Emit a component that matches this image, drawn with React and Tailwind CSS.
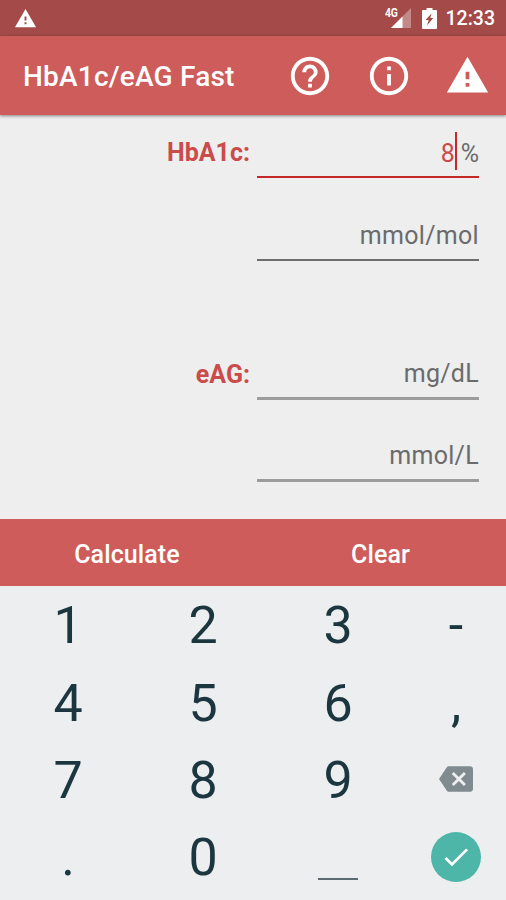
import { useState } from 'react';

const ICONS = {
  help: 'M11 18h2v-2h-2v2zm1-16C6.48 2 2 6.48 2 12s4.48 10 10 10 10-4.48 10-10S17.52 2 12 2zm0 18c-4.41 0-8-3.59-8-8s3.59-8 8-8 8 3.59 8 8-3.59 8-8 8zm0-14c-2.21 0-4 1.79-4 4h2c0-1.1.9-2 2-2s2 .9 2 2c0 2-3 1.75-3 5h2c0-2.25 3-2.5 3-5 0-2.21-1.79-4-4-4z',
  info: 'M11 17h2v-6h-2v6zm1-15C6.48 2 2 6.48 2 12s4.48 10 10 10 10-4.48 10-10S17.52 2 12 2zm0 18c-4.41 0-8-3.59-8-8s3.59-8 8-8 8 3.59 8 8-3.59 8-8 8zM11 9h2V7h-2v2z',
  warning: 'M1 21h22L12 2 1 21zm12-3h-2v-2h2v2zm0-4h-2v-4h2v4z',
  backspace: 'M22 3H7c-.69 0-1.23.35-1.59.88L0 12l5.41 8.11c.36.53.9.89 1.59.89h15c1.1 0 2-.9 2-2V5c0-1.1-.9-2-2-2zm-3 12.59L17.59 17 14 13.41 10.41 17 9 15.59 12.59 12 9 8.41 10.41 7 14 10.59 17.59 7 19 8.41 15.41 12 19 15.59z',
  check: 'M9 16.17L4.83 12l-1.42 1.41L9 19 21 7l-1.41-1.41z',
};

function Icon({ name, className }) {
  return (
    <svg viewBox="0 0 24 24" fill="currentColor" className={`shrink-0 ${className}`}>
      <path d={ICONS[name]} />
    </svg>
  );
}

function StatusBar() {
  return (
    <div className="flex h-9 items-center bg-[#a44a49] pl-3.5 pr-[11px] text-white">
      <Icon name="warning" className="size-[23px]" />
      <div className="ml-auto flex items-center">
        <div className="relative h-5 w-[26px]">
          <svg viewBox="0 0 26 20" className="h-5 w-[26px]">
            <path d="M26 0v20H6z" fill="#fff" fillOpacity="0.35" />
            <path d="M17.5 8.500V20H6z" fill="#fff" />
          </svg>
          <span className="absolute left-0 -top-0.5 origin-left scale-x-80 text-[13px] font-bold leading-none tracking-tight">4G</span>
        </div>
        <svg viewBox="0 0 15 21" className="ml-[11px] h-[21px] w-[15px]">
          <path d="M4.5 0h6v2H14a1 1 0 0 1 1 1v17a1 1 0 0 1-1 1H1a1 1 0 0 1-1-1V3a1 1 0 0 1 1-1h3.500z" fill="#fff" />
          <path d="M9.500 5.500L8.300 10h3L5 17.500l1.700-5.500H3.500z" fill="#a44a49" />
        </svg>
        <span className="ml-[9px] pt-0.5 text-[19.5px] font-medium leading-none">12:33</span>
      </div>
    </div>
  );
}

function Toolbar() {
  return (
    <header className="relative flex h-[79px] items-center bg-[#cd5c5a] pl-[23px] pr-4 text-white shadow-[0_1px_3px_rgba(0,0,0,0.45)]">
      <h1 className="pt-[3px] text-[28px] font-medium leading-none tracking-[0.2px]">HbA1c/eAG Fast</h1>
      <div className="ml-auto flex items-center gap-[33px]">
        <button type="button"><Icon name="help" className="size-[46px]" /></button>
        <button type="button"><Icon name="info" className="size-[46px]" /></button>
        <button type="button"><Icon name="warning" className="size-[45px]" /></button>
      </div>
    </header>
  );
}

function Field({ label, value, unit, active, line }) {
  return (
    <div className="flex h-[52px] justify-end pr-[27px] text-[25px] leading-[52px]">
      {label && <span className="pr-[7px] pt-px font-bold text-[#cb4a4a]">{label}</span>}
      <div className={`flex w-[222px] items-center justify-end ${line}`}>
        {active && (
          <>
            <span className="pt-[5px] text-[#cb4a4a]">{value}</span>
            <span className="mr-1 h-[38px] w-0.5 bg-[#c62828]" />
          </>
        )}
        <span className={`text-[#6b6b6b] ${active ? 'pt-[5px]' : 'pt-[3px] tracking-[0.3px]'}`}>{unit}</span>
      </div>
    </div>
  );
}

const KEYS = ['1', '2', '3', '-', '4', '5', '6', ',', '7', '8', '9', 'del', '.', '0', '_', 'done'];

function Key({ id, onPress }) {
  let face = <span className="pl-px pt-[3px]">{id}</span>;
  if (id === 'del') face = <Icon name="backspace" className="size-[34px] text-[#808b8f]" />;
  if (id === '_') face = <span className="mt-[44px] h-0.5 w-10 bg-[#5b6b71]" />;
  if (id === 'done') {
    face = (
      <span className="flex size-[50px] items-center justify-center rounded-full bg-[#4db6a9] text-white">
        <Icon name="check" className="size-8" />
      </span>
    );
  }
  return (
    <button type="button" onClick={() => onPress(id)} className="flex items-center justify-center leading-none">
      {face}
    </button>
  );
}

export default function App() {
  const [value, setValue] = useState('8');

  function press(id) {
    if (id === 'del') setValue((v) => v.slice(0, -1));
    else if (/^[0-9.]$/.test(id)) setValue((v) => v + id);
  }

  return (
    <div className="flex h-[900px] w-[506px] flex-col overflow-hidden bg-[#eeeeee] font-[Roboto,sans-serif]">
      <StatusBar />
      <Toolbar />

      <main className="flex flex-1 flex-col pt-[11px]">
        <Field label="HbA1c:" value={value} unit="%" active line="border-b-2 border-[#c62828]" />
        <div className="h-[31px]" />
        <Field unit="mmol/mol" line="border-b-2 border-[#6e6e6e]" />
        <div className="h-[87px]" />
        <Field label="eAG:" unit="mg/dL" line="border-b-3 border-[#9c9c9c]" />
        <div className="h-[30px]" />
        <Field unit="mmol/L" line="border-b-3 border-[#9c9c9c]" />
      </main>

      <div className="grid h-[67px] grid-cols-2 bg-[#cd5c5a] text-[25px] font-medium tracking-[0.1px] text-white">
        <button type="button" className="pl-px pt-1">Calculate</button>
        <button type="button" className="pl-0.5 pt-1" onClick={() => setValue('')}>Clear</button>
      </div>

      <div className="grid h-[314px] grid-cols-[135px_135px_135px_101px] grid-rows-[repeat(4,77.4px)] bg-[#eceef0] text-[52px] text-[#1c3640]">
        {KEYS.map((id) => (
          <Key key={id} id={id} onPress={press} />
        ))}
      </div>
    </div>
  );
}
